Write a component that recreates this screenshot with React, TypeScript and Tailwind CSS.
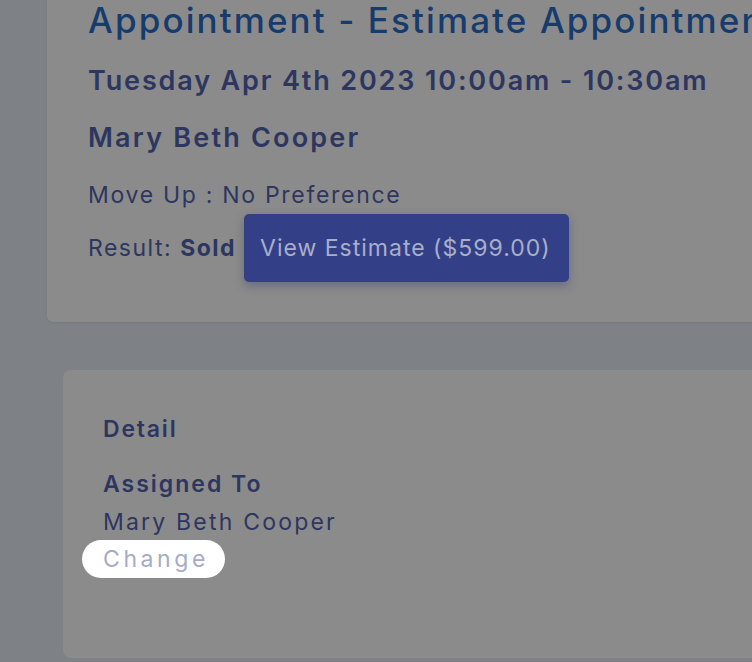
import React from "react";

export default function App() {
  return (
    <div
      className="w-[752px] h-[662px] overflow-hidden bg-[#7e8286] relative"
      style={{ fontFamily: "Inter, 'Noto Sans', sans-serif" }}
    >
      <div className="ml-[47px] w-[800px] h-[322px] bg-[#8b8b8b] rounded-bl-[6px] pl-[41px] shadow-[0_1px_2px_rgba(0,0,0,0.08)]">
        <div className="text-[35px] leading-[40px] font-medium text-[#163c6e] whitespace-nowrap tracking-[2.1px]">
          Appointment - Estimate Appointment
        </div>
        <div className="mt-[25px] text-[27px] leading-[32px] font-semibold text-[#2d3660] whitespace-nowrap tracking-[1.85px]">
          Tuesday Apr 4th 2023 10:00am - 10:30am
        </div>
        <div className="mt-[25px] text-[27px] leading-[32px] font-semibold text-[#2d3660] whitespace-nowrap tracking-[2.2px]">
          Mary Beth Cooper
        </div>
        <div className="mt-[27px] text-[23px] leading-[28px] text-[#2d3660] whitespace-nowrap tracking-[1.7px]">
          Move Up : No Preference
        </div>
        <div className="mt-[5px] flex items-center gap-[8px] text-[23px] text-[#2d3660] whitespace-nowrap">
          <span className="tracking-[1.5px]">
            Result: <span className="font-bold">Sold</span>
          </span>
          <div className="h-[68px] pl-[16px] pr-[18px] flex items-center bg-[#334088] rounded-[5px] text-[#a9aec9] tracking-[1px] shadow-[0_4px_10px_rgba(40,50,110,0.35)]">
            View Estimate ($599.00)
          </div>
        </div>
      </div>
      <div className="ml-[63px] mt-[48px] w-[800px] h-[288px] bg-[#8b8b8b] rounded-[8px] pl-[40px] pt-[44px]">
        <div className="text-[23px] leading-[30px] font-semibold text-[#2d3660] tracking-[1.8px]">Detail</div>
        <div className="mt-[25px] text-[23px] leading-[30px] font-semibold text-[#2d3660] tracking-[2px]">Assigned To</div>
        <div className="mt-[8px] text-[23px] leading-[30px] text-[#2d3660] tracking-[2.2px]">Mary Beth Cooper</div>
        <div className="-ml-[21px] mt-[3px] w-[143px] h-[38px] bg-white rounded-full flex items-center pl-[21px] text-[23px] text-[#a5acc8] tracking-[3.6px]">
          Change
        </div>
      </div>
    </div>
  );
}
